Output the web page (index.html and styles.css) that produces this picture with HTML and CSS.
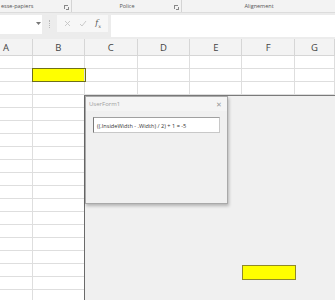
FILE: index.html
```html
<!DOCTYPE html>
<html>
<head>
<meta charset="utf-8">
<link rel="stylesheet" href="styles.css">
</head>
<body>
<div class="app">
  <div class="ribbon">
    <div class="grp g1"><span class="glabel">esse-papiers</span><span class="launch"></span></div>
    <div class="grp g2"><span class="glabel center">Police</span><span class="launch"></span></div>
    <div class="grp g3"><span class="glabel center">Alignement</span></div>
  </div>
  <div class="fbar">
    <div class="namebox"><svg class="dd" width="5" height="3" viewBox="0 0 5 3"><path d="M0 0h5L2.5 3z" fill="#777"/></svg></div>
    <div class="dots"></div>
    <div class="fbtns">
      <svg width="7" height="7" viewBox="0 0 7 7"><path d="M1 1l5 5M6 1L1 6" stroke="#c4c4c4" stroke-width="0.9"/></svg>
      <svg width="8" height="7" viewBox="0 0 8 7"><path d="M1 4l2 2 4-5" stroke="#c4c4c4" stroke-width="0.9" fill="none"/></svg>
      <span class="fx">f<sub>x</sub></span>
    </div>
    <div class="finput"></div>
  </div>
  <div class="sheet">
    <div class="hdr">
      <div class="ch w0">A</div><div class="ch w1">B</div><div class="ch w2">C</div><div class="ch w2">D</div><div class="ch w1">E</div><div class="ch w2">F</div><div class="ch w3">G</div>
    </div>
    <div class="rows">
      <div class="row"><div class="c w0"></div><div class="c w1"></div><div class="c w2"></div><div class="c w2"></div><div class="c w1"></div><div class="c w2"></div><div class="c w3"></div></div>
      <div class="row"><div class="c w0"></div><div class="c w1 yel"></div><div class="c w2"></div><div class="c w2"></div><div class="c w1"></div><div class="c w2"></div><div class="c w3"></div></div>
      <div class="row"><div class="c w0"></div><div class="c w1"></div><div class="c w2"></div><div class="c w2"></div><div class="c w1"></div><div class="c w2"></div><div class="c w3"></div></div>
      <div class="row"><div class="c w0"></div><div class="c w1"></div></div>
      <div class="row"><div class="c w0"></div><div class="c w1"></div></div>
      <div class="row"><div class="c w0"></div><div class="c w1"></div></div>
      <div class="row"><div class="c w0"></div><div class="c w1"></div></div>
      <div class="row"><div class="c w0"></div><div class="c w1"></div></div>
      <div class="row"><div class="c w0"></div><div class="c w1"></div></div>
      <div class="row"><div class="c w0"></div><div class="c w1"></div></div>
      <div class="row"><div class="c w0"></div><div class="c w1"></div></div>
      <div class="row"><div class="c w0"></div><div class="c w1"></div></div>
      <div class="row"><div class="c w0"></div><div class="c w1"></div></div>
      <div class="row"><div class="c w0"></div><div class="c w1"></div></div>
      <div class="row"><div class="c w0"></div><div class="c w1"></div></div>
      <div class="row"><div class="c w0"></div><div class="c w1"></div></div>
      <div class="row"><div class="c w0"></div><div class="c w1"></div></div>
      <div class="row"><div class="c w0"></div><div class="c w1"></div></div>
      <div class="row"><div class="c w0"></div><div class="c w1"></div></div>
    </div>
  </div>
  <div class="bigform">
    <div class="ylabel"></div>
  </div>
  <div class="dialog">
    <div class="dtitle"><span>UserForm1</span><span class="close">✕</span></div>
    <div class="dbody">
      <div class="tbox">((.InsideWidth - .Width) / 2) + 1 = -5</div>
    </div>
  </div>
</div>
</body>
</html>
```
FILE: styles.css
```css
* { box-sizing: border-box; }
html, body { margin: 0; padding: 0; }
body { width: 335px; height: 300px; overflow: hidden; background: #fff; font-family: "Open Sans", "Liberation Sans", sans-serif; }
.app { position: relative; width: 335px; height: 300px; overflow: hidden; }

.ribbon { display: flex; height: 13px; background: #f3f3f3; border-bottom: 1px solid #dcdcdc; }
.grp { position: relative; height: 12px; font-size: 5.5px; color: #555; display: flex; align-items: center; }
.g1 { width: 72px; border-right: 1px solid #d4d4d4; }
.g2 { width: 110px; border-right: 1px solid #d4d4d4; }
.g3 { flex: 1; }
.glabel { padding-left: 1px; white-space: nowrap; }
.glabel.center { flex: 1; text-align: center; }
.launch { position: absolute; right: 3px; top: 5px; width: 4px; height: 4px; border-left: 1px solid #888; border-top: 1px solid #888; }
.launch::after { content: ""; position: absolute; right: -1px; bottom: -1px; width: 2px; height: 2px; border-right: 1px solid #888; border-bottom: 1px solid #888; }

.fbar { display: flex; align-items: flex-start; height: 26px; background: #ececec; padding-top: 2px; }
.namebox { position: relative; width: 42px; height: 19px; background: #fff; }
.dd { position: absolute; left: 36px; top: 7px; }
.dots { width: 1px; height: 8px; margin: 5px 7px 0 7px; border-left: 1px dotted #b8b8b8; }
.fbtns { display: flex; align-items: center; justify-content: space-around; width: 51px; height: 17px; background: #f7f7f7; padding: 0 3px; }
.fx { font-family: "DejaVu Serif", serif; font-style: italic; font-size: 8px; color: #555; }
.fx sub { font-size: 5px; }
.finput { flex: 1; height: 22px; background: #fff; margin-left: 3px; }

.sheet { }
.hdr { display: flex; height: 17px; background: #f3f3f3; border-bottom: 1px solid #d6d6d6; }
.ch { font-size: 9.5px; color: #444; display: flex; align-items: center; justify-content: center; border-right: 1px solid #d6d6d6; font-family: "Open Sans", sans-serif; }
.w0 { width: 33px; }
.w1 { width: 52px; }
.w2 { width: 53px; }
.w3 { width: 40px; }
.hdr .w0 { justify-content: flex-start; padding-left: 3px; }
.rows { }
.row { display: flex; height: 13px; border-bottom: 1px solid #dedede; }
.c { height: 12px; border-right: 1px solid #dedede; }
.c.yel { background: #ffff00; outline: 1px solid #6f6f1a; outline-offset: 0; position: relative; }

.bigform { position: absolute; left: 84px; top: 95px; right: -2px; bottom: -2px; background: #f0f0f0; border-left: 1px solid #6a6a6a; border-top: 1px solid #7a7a7a; }
.ylabel { position: absolute; left: 157px; top: 169px; width: 54px; height: 15px; background: #ffff00; border: 1px solid #8f8a2a; }

.dialog { position: absolute; left: 85px; top: 96px; width: 143px; height: 108px; background: #f0f0f0; border: 1px solid #a9a9a9; box-shadow: 1px 2px 3px rgba(0,0,0,0.25); display: flex; flex-direction: column; }
.dtitle { height: 14px; display: flex; align-items: center; justify-content: space-between; padding: 0 5px 0 3px; font-size: 6px; color: #a0a0a0; background: #f4f4f4; }
.close { font-size: 7px; color: #999; }
.dbody { flex: 1; padding: 6px 0 0 7px; }
.tbox { width: 127px; height: 16px; background: #fff; border: 1px solid #c8c8c8; border-left: 1px solid #7a7a7a; border-top: 1px solid #a0a0a0; font-size: 5.6px; color: #333; padding: 4px 0 0 3px; white-space: nowrap; overflow: hidden; }
```
